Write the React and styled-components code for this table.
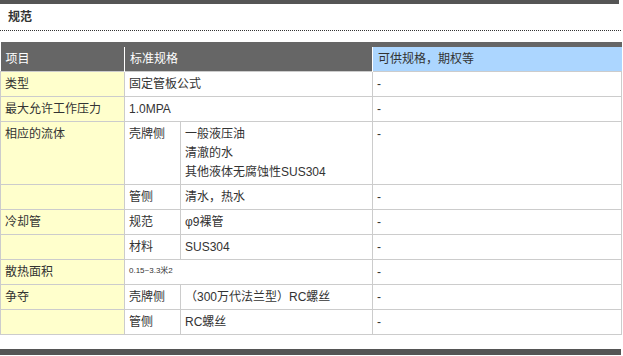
import React from "react";
import styled, { createGlobalStyle } from "styled-components";

const Global = createGlobalStyle`
  html, body { margin: 0; padding: 0; background: #fff; }
  body { font-family: "Liberation Sans", "Noto Sans CJK SC", sans-serif; color: #333; }
`;

const Page = styled.div`
  width: 621px;
  display: flex;
  flex-direction: column;
`;

const Bar = styled.div`
  height: ${(p) => p.$h}px;
  width: ${(p) => p.$w}px;
  margin-top: ${(p) => p.$mt || 0}px;
  background: #555;
`;

const Title = styled.h2`
  margin: 0;
  height: 26px;
  padding-left: 8px;
  font-size: 12px;
  font-weight: bold;
  line-height: 27px;
  color: #333;
  border-bottom: 1px dotted #333;
`;

const Table = styled.table`
  margin-top: 11px;
  width: 621px;
  table-layout: fixed;
  border-collapse: collapse;
  border-top: 5px solid #666;
  font-size: 12px;
  line-height: 19px;
`;

const Th = styled.th`
  background: ${(p) => (p.$blue ? "#acd6ff" : "#666")};
  color: ${(p) => (p.$blue ? "#333" : "#fff")};
  font-weight: normal;
  text-align: left;
  padding: 3px 5px 2px;
  border-left: 1px solid #fff;
  &:first-child { border-left: none; }
`;

const Td = styled.td`
  background: ${(p) => (p.$yellow ? "#ffffcc" : "#fff")};
  border: 1px solid #ccc;
  padding: 3px 5px 2px 4px;
  vertical-align: top;
  font-size: ${(p) => (p.$small ? "8px" : "12px")};
  line-height: ${(p) => (p.$small ? "15px" : "19px")};
  color: #333;
  white-space: nowrap;
`;

const rows = [
  { k: "类型", v: "固定管板公式" },
  { k: "最大允许工作压力", v: "1.0MPA" },
  { k: "相应的流体", a: "壳牌侧", b: ["一般液压油", "清澈的水", "其他液体无腐蚀性SUS304"] },
  { k: "", a: "管侧", b: ["清水，热水"] },
  { k: "冷却管", a: "规范", b: ["φ9裸管"] },
  { k: "", a: "材料", b: ["SUS304"] },
  { k: "散热面积", v: "0.15~3.3米2", small: true },
  { k: "争夺", a: "壳牌侧", b: ["（300万代法兰型）RC螺丝"] },
  { k: "", a: "管侧", b: ["RC螺丝"] },
];

export default function App() {
  return (
    <>
      <Global />
      <Page>
        <Bar $h={4} $w={619} />
        <Title>规范</Title>
        <Table>
          <colgroup>
            <col style={{ width: 124 }} />
            <col style={{ width: 56 }} />
            <col style={{ width: 192 }} />
            <col style={{ width: 249 }} />
          </colgroup>
          <thead>
            <tr>
              <Th>项目</Th>
              <Th colSpan={2}>标准规格</Th>
              <Th $blue>可供规格，期权等</Th>
            </tr>
          </thead>
          <tbody>
            {rows.map((r, i) => (
              <tr key={i}>
                <Td $yellow>{r.k}</Td>
                {r.v !== undefined ? (
                  <Td colSpan={2} $small={r.small}>{r.v}</Td>
                ) : (
                  <>
                    <Td>{r.a}</Td>
                    <Td>
                      {r.b.map((line, j) => (
                        <div key={j}>{line}</div>
                      ))}
                    </Td>
                  </>
                )}
                <Td>-</Td>
              </tr>
            ))}
          </tbody>
        </Table>
        <Bar $h={6} $w={621} $mt={14} />
      </Page>
    </>
  );
}
